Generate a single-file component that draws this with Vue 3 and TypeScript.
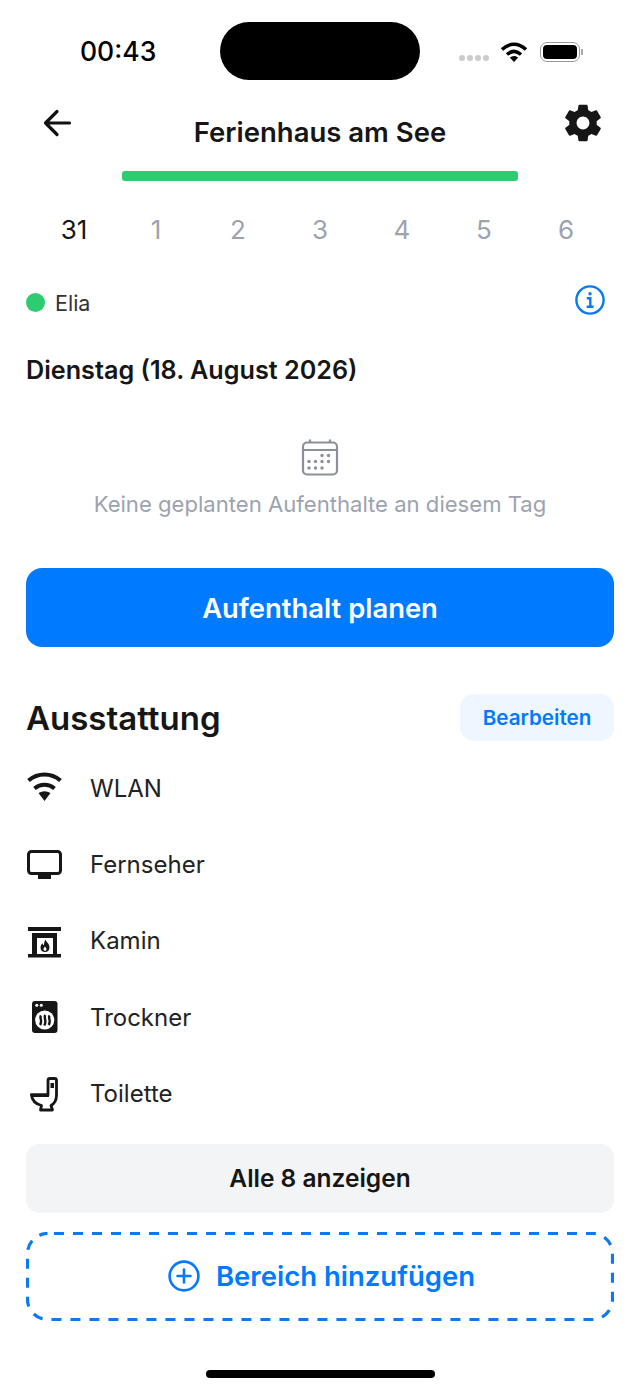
<template>
  <div class="screen">
    <div class="status">
      <span class="time">00:43</span>
      <div class="island"></div>
      <div class="status-right">
        <div class="signal"><i></i><i></i><i></i><i></i></div>
        <svg width="28" height="22" viewBox="0 0 28 22" class="status-wifi">
          <path d="M2 8.5C9.5 1.5 18.5 1.500 26 8.500" fill="none" stroke="#000" stroke-width="3.6" />
          <path d="M7 13.500C11.500 9.500 16.500 9.500 21 13.500" fill="none" stroke="#000" stroke-width="3.4" />
          <path d="M9.800 16.600C12.500 14.500 15.500 14.500 18.200 16.600L14 21Z" fill="#000" />
        </svg>
        <div class="battery"><div class="battery-fill"></div></div>
        <div class="battery-cap"></div>
      </div>
    </div>

    <header class="nav">
      <svg class="back" width="32" height="32" viewBox="0 0 32 32" fill="none" stroke="#111" stroke-width="3.200" stroke-linecap="round" stroke-linejoin="round">
        <path d="M27.500 16H4.500M15 4.500L3.500 16L15 27.500" />
      </svg>
      <h1>Ferienhaus am See</h1>
      <svg class="gear" width="44" height="44" viewBox="0 0 24 24" fill="#161616">
        <path d="M19.430 12.980c.04-.32.070-.64.070-.98s-.03-.66-.07-.98l2.110-1.650c.19-.15.240-.42.120-.64l-2-3.460c-.12-.22-.39-.3-.61-.22l-2.490 1c-.52-.4-1.080-.73-1.690-.98l-.38-2.650A.488.488 0 0 0 14 2h-4c-.25 0-.46.180-.49.420l-.38 2.650c-.61.25-1.170.59-1.690.98l-2.490-1c-.23-.09-.49 0-.61.220l-2 3.460c-.13.220-.07.490.12.640l2.110 1.650c-.04.320-.07.650-.07.980s.03.660.07.980l-2.110 1.650c-.19.150-.24.420-.12.640l2 3.460c.12.220.39.300.61.220l2.490-1c.52.400 1.080.730 1.690.980l.38 2.650c.03.240.24.420.49.420h4c.25 0 .46-.18.49-.42l.38-2.650c.61-.25 1.170-.59 1.690-.98l2.490 1c.23.090.49 0 .61-.22l2-3.460c.12-.22.07-.49-.12-.64l-2.110-1.650zM12 15.500c-1.930 0-3.500-1.570-3.500-3.500s1.570-3.500 3.500-3.500 3.500 1.570 3.500 3.500-1.570 3.500-3.500 3.500z" />
      </svg>
    </header>

    <div class="progress"></div>

    <div class="days">
      <span v-for="(d, i) in days" :key="d" :class="{ active: i === 0 }">{{ d }}</span>
    </div>

    <div class="person-row">
      <div class="person"><span class="dot"></span>Elia</div>
      <svg width="32" height="32" viewBox="0 0 32 32" fill="none" stroke="#0a7af0" stroke-width="2.400">
        <circle cx="16" cy="16" r="13.600" />
        <circle cx="16" cy="9.800" r="1.700" fill="#0a7af0" stroke="none" />
        <path d="M12.800 14.200H16.300V22.800M12.600 22.800H19.600" />
      </svg>
    </div>

    <h2 class="date">Dienstag (18. August 2026)</h2>

    <div class="empty">
      <svg width="38" height="38" viewBox="0 0 38 38" fill="none" stroke="#8b9099" stroke-width="2.200">
        <rect x="2" y="4.500" width="34" height="32" rx="4" />
        <path d="M2 12H36M9 1.500V4.500M29 1.500V4.500" />
        <g fill="#8b9099" stroke="none">
          <circle cx="21" cy="17.500" r="1.700" /><circle cx="27.500" cy="17.500" r="1.700" />
          <circle cx="8" cy="23.500" r="1.700" /><circle cx="14.500" cy="23.500" r="1.700" /><circle cx="21" cy="23.500" r="1.700" /><circle cx="27.500" cy="23.500" r="1.700" />
          <circle cx="8" cy="30" r="1.700" /><circle cx="14.500" cy="30" r="1.700" /><circle cx="21" cy="30" r="1.700" />
        </g>
      </svg>
      <p>Keine geplanten Aufenthalte an diesem Tag</p>
    </div>

    <button class="primary">Aufenthalt planen</button>

    <div class="section-head">
      <h2>Ausstattung</h2>
      <button class="edit">Bearbeiten</button>
    </div>

    <ul class="list">
      <li>
        <svg width="38" height="36" viewBox="0 0 38 36">
          <path d="M2.500 10.500C12 2.500 25 2.500 34.500 10.500" fill="none" stroke="#161616" stroke-width="4" />
          <path d="M8.500 18.500C14.500 13.500 22.500 13.500 28.500 18.500" fill="none" stroke="#161616" stroke-width="4" />
          <path d="M12.500 23C16.500 20.800 20.500 20.800 24.500 23L18.500 31Z" fill="#161616" />
        </svg>
        <span>WLAN</span>
      </li>
      <li>
        <svg width="38" height="36" viewBox="0 0 38 36">
          <rect x="2.500" y="4.500" width="32" height="22" rx="3" fill="none" stroke="#161616" stroke-width="3" />
          <rect x="12" y="27" width="13" height="5" fill="#161616" />
        </svg>
        <span>Fernseher</span>
      </li>
      <li>
        <svg width="38" height="36" viewBox="0 0 38 36">
          <path d="M2 4H35V8H2ZM2 31H35V34.500H2Z" fill="#161616" />
          <path fill-rule="evenodd" d="M6 10H31V31H6ZM11 15V31H27V15Z" fill="#161616" />
          <path fill-rule="evenodd" d="M19.500 16.500C20 19 23.500 20.500 23.500 24.500C23.500 27.500 21.500 29 19 29C16.500 29 14.500 27.500 14.500 24.700C14.500 22.500 15.600 21.300 16.500 20.300C16.700 21.500 17.200 22 17.900 22.200C18 20 18.500 18.300 19.500 16.500ZM19 23.500C18.300 24.600 17.500 25 17.500 26.200C17.500 27.100 18.100 27.700 19 27.700C19.900 27.700 20.500 27.100 20.500 26.200C20.500 25 19.500 24.700 19 23.500Z" fill="#161616" />
        </svg>
        <span>Kamin</span>
      </li>
      <li>
        <svg width="38" height="36" viewBox="0 0 38 36">
          <rect x="6" y="2" width="25.500" height="32" rx="3" fill="#161616" />
          <circle cx="10.800" cy="6.200" r="1.500" fill="#fff" /><circle cx="15.300" cy="6.200" r="1.500" fill="#fff" />
          <circle cx="18.700" cy="21" r="9.600" fill="#fff" />
          <path d="M15 16.500C13 19 17 21.500 14 26M19.300 16C17.300 19 21.300 21.500 18.300 26.500M23.600 16.500C21.600 19 25.600 21.500 22.600 26" fill="none" stroke="#161616" stroke-width="2.400" />
        </svg>
        <span>Trockner</span>
      </li>
      <li>
        <svg width="38" height="36" viewBox="0 0 38 36">
          <path d="M22 19V4.500C22 3.300 23 2.500 24 2.500H28.500C29.700 2.500 30.500 3.300 30.500 4.500V19C30.500 24 28.500 27.500 25 29.500L26.500 34H14.500L15.500 29.500C10 28 6 24 5.500 19Z" fill="none" stroke="#161616" stroke-width="2.800" stroke-linejoin="round" />
          <path d="M4 17.500H23V21H6Z" fill="#161616" />
          <rect x="24.500" y="7" width="3.500" height="5" fill="#161616" />
        </svg>
        <span>Toilette</span>
      </li>
    </ul>

    <button class="show-all">Alle 8 anzeigen</button>

    <button class="add">
      <svg class="add-border" width="588" height="89" viewBox="0 0 588 89" fill="none">
        <rect x="1.500" y="1.500" width="585" height="86" rx="20" stroke="#0a7af0" stroke-width="3.200" stroke-dasharray="10 9" stroke-dashoffset="-6.500" />
      </svg>
      <svg width="32" height="32" viewBox="0 0 32 32" fill="none" stroke="#007aff" stroke-width="2.600">
        <circle cx="16" cy="16" r="14.400" />
        <path d="M16 9.500V22.500M9.500 16H22.500" stroke-linecap="round" />
      </svg>
      Bereich hinzufügen
    </button>

    <div class="home"></div>
  </div>
</template>

<script setup lang="ts">
const days: number[] = [31, 1, 2, 3, 4, 5, 6]
</script>

<style>
html,
body {
  margin: 0;
  background: #fff;
}
</style>

<style scoped>
.screen {
  width: 640px;
  height: 1391px;
  box-sizing: border-box;
  padding: 22px 26px 0;
  background: #fff;
  font-family: Inter, "Liberation Sans", sans-serif;
  color: #161616;
  overflow: hidden;
}

.status {
  display: flex;
  align-items: center;
  height: 58px;
}

.time {
  width: 194px;
  padding-left: 54px;
  box-sizing: border-box;
  font-size: 26.500px;
  font-weight: 500;
  color: #000;
}

.island {
  width: 200px;
  height: 58px;
  border-radius: 29px;
  background: #000;
}

.status-right {
  display: flex;
  align-items: center;
  margin-left: 39px;
}

.signal {
  display: flex;
  gap: 2px;
  margin-top: 14px;
  margin-right: 11px;
}

.signal i {
  width: 6px;
  height: 6px;
  border-radius: 50%;
  background: #ccc;
}

.status-wifi {
  margin-right: 12px;
  margin-top: 2px;
}

.battery {
  width: 40px;
  height: 20px;
  box-sizing: border-box;
  padding: 2px;
  border: 1.500px solid #999;
  border-radius: 7px;
  margin-top: 1px;
}

.battery-fill {
  height: 100%;
  border-radius: 4px;
  background: #000;
}

.battery-cap {
  width: 2px;
  height: 6px;
  margin-top: 1px;
  margin-left: 1px;
  background: #aaa;
}

.nav {
  display: flex;
  align-items: flex-start;
  justify-content: space-between;
  height: 91px;
  padding: 0 9px 0 16px;
}

.back {
  margin-top: 27px;
}

h1 {
  margin: 36px 0 0 5px;
  font-size: 27.500px;
  font-weight: 600;
  line-height: 32px;
}

.gear {
  margin-top: 21px;
}

.progress {
  width: 396px;
  height: 10px;
  margin: 0 auto;
  border-radius: 3px;
  background: #2ecc71;
}

.days {
  display: grid;
  grid-template-columns: repeat(7, 82px);
  margin: 33px 0 0 7px;
  font-size: 26px;
  line-height: 32px;
  color: #9ca3af;
  text-align: center;
}

.days .active {
  color: #161616;
}

.person-row {
  display: flex;
  align-items: center;
  justify-content: space-between;
  margin-top: 38px;
  padding-right: 8px;
  height: 32px;
}

.person {
  display: flex;
  align-items: center;
  gap: 10px;
  margin-top: 5px;
  font-size: 21.500px;
  color: #333;
}

.dot {
  width: 19px;
  height: 19px;
  border-radius: 50%;
  background: #2ecc71;
}

.date {
  margin: 39px 0 0;
  font-size: 25.200px;
  font-weight: 600;
  line-height: 30px;
}

.empty {
  display: flex;
  flex-direction: column;
  align-items: center;
  margin-top: 53px;
}

.empty p {
  margin: 13px 0 0;
  font-size: 22.100px;
  line-height: 30px;
  color: #9ca3af;
}

button {
  display: block;
  width: 100%;
  border: none;
  padding: 0;
  font-family: inherit;
}

.primary {
  height: 79px;
  margin-top: 49px;
  border-radius: 16px;
  background: #007aff;
  color: #fff;
  font-size: 27.400px;
  font-weight: 600;
}

.section-head {
  display: flex;
  align-items: center;
  justify-content: space-between;
  margin-top: 47px;
}

.section-head h2 {
  margin: 0;
  font-size: 33px;
  font-weight: 600;
}

.edit {
  width: 154px;
  height: 47px;
  border-radius: 14px;
  background: #eef6ff;
  color: #007aff;
  font-size: 20.600px;
  font-weight: 600;
}

.list {
  list-style: none;
  margin: 9px 0 0;
  padding: 0;
}

.list li {
  display: flex;
  align-items: center;
  gap: 26px;
  height: 76.400px;
  font-size: 24px;
  color: #222;
}

.show-all {
  height: 69px;
  margin-top: 12px;
  border-radius: 14px;
  background: #f3f4f6;
  color: #161616;
  font-size: 24.500px;
  font-weight: 600;
}

.add {
  position: relative;
  display: flex;
  align-items: center;
  justify-content: center;
  gap: 16px;
  height: 89px;
  margin-top: 19px;
  padding-left: 3px;
  box-sizing: border-box;
  background: none;
  color: #007aff;
  font-size: 27.500px;
  font-weight: 600;
}

.add-border {
  position: absolute;
  top: 0;
  left: 0;
}

.home {
  width: 229px;
  height: 8px;
  margin: 49px auto 0;
  border-radius: 4px;
  background: #000;
}
</style>
